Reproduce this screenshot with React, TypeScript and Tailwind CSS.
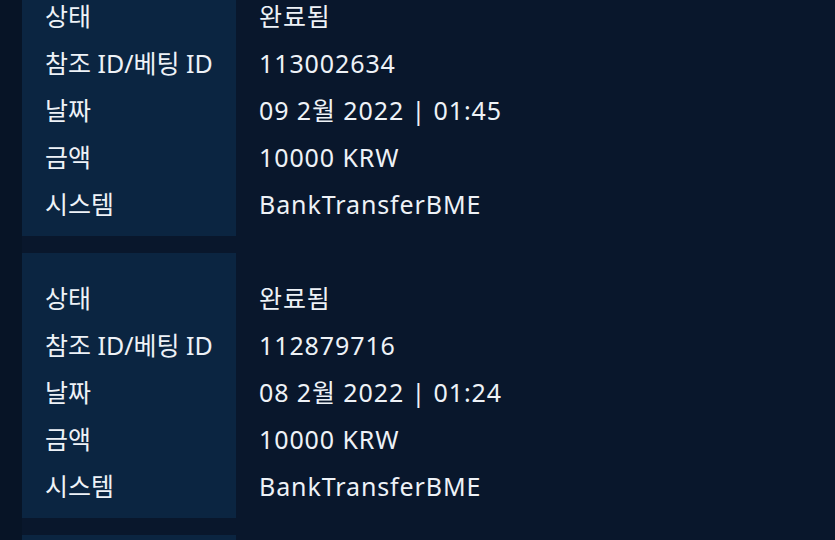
const TXS = [
  { status: '완료됨', ref: '113002634', date: '09 2월 2022 | 01:45', amount: '10000 KRW', system: 'BankTransferBME' },
  { status: '완료됨', ref: '112879716', date: '08 2월 2022 | 01:24', amount: '10000 KRW', system: 'BankTransferBME' },
  { status: '완료됨', ref: '112790311', date: '07 2월 2022 | 23:10', amount: '10000 KRW', system: 'BankTransferBME' },
];

const LABELS = ['상태', '참조 ID/베팅 ID', '날짜', '금액', '시스템'];

function TxCard({ tx }: { tx: (typeof TXS)[number] }) {
  const values = [tx.status, tx.ref, tx.date, tx.amount, tx.system];
  return (
    <div className="flex">
      <div className="w-[214px] shrink-0 bg-[#0b2541] px-[23px] pt-[22px] pb-[8px]">
        {LABELS.map((l) => (
          <div key={l} className="flex h-[47px] items-center whitespace-nowrap">{l}</div>
        ))}
      </div>
      <div className="flex-1 pl-[23px] pt-[22px] pb-[8px] tracking-[0.9px]">
        {values.map((v, i) => (
          <div key={i} className="flex h-[47px] items-center whitespace-nowrap">{v}</div>
        ))}
      </div>
    </div>
  );
}

export default function App() {
  return (
    <div
      className="h-[540px] w-[835px] overflow-hidden bg-[#071426] text-[25px] text-[#eef2f7]"
      style={{ fontFamily: '"Noto Sans", "Noto Sans CJK KR", sans-serif' }}
    >
      <div className="ml-[22px] -mt-[29px] flex h-[600px] flex-col gap-[17px] bg-[#09172c]">
        {TXS.map((tx) => (
          <TxCard key={tx.ref} tx={tx} />
        ))}
      </div>
    </div>
  );
}
